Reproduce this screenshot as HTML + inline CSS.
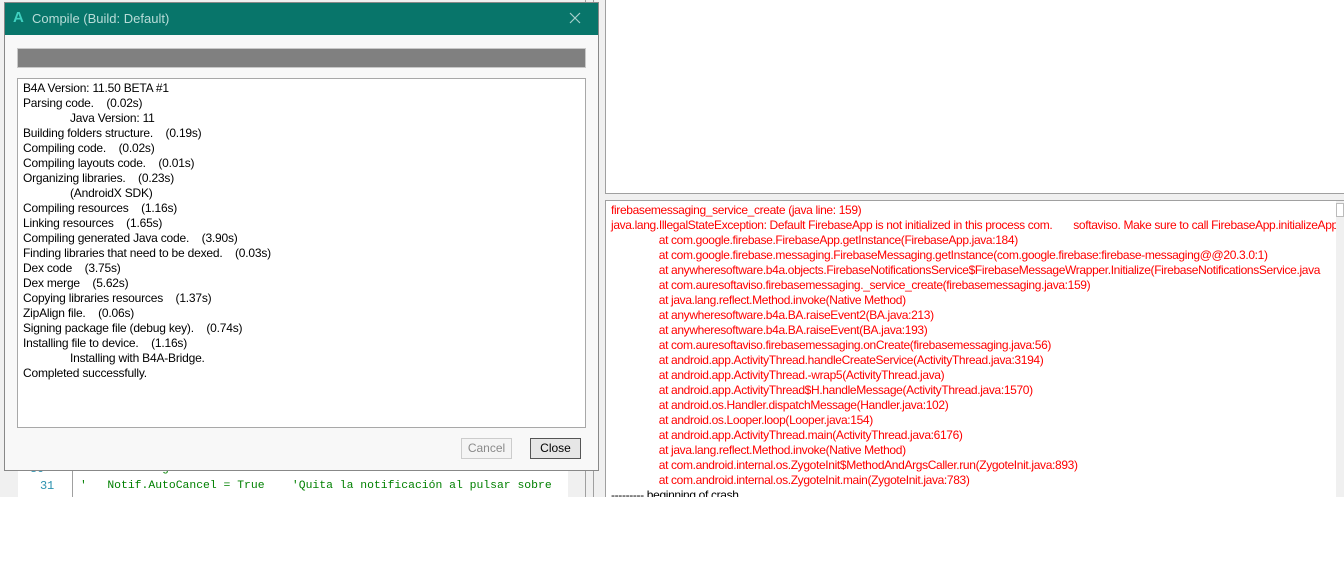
<!DOCTYPE html>
<html><head><meta charset="utf-8"><style>
*{margin:0;padding:0;box-sizing:border-box}
body{width:1344px;height:586px;background:#fff;position:relative;overflow:hidden;font-family:"Liberation Sans",sans-serif;font-size:12px}
.abs{position:absolute}
.t{position:absolute;white-space:pre;line-height:15px;letter-spacing:-0.2px}
</style></head><body>
<div class="abs" style="left:0;top:0;width:605px;height:497px;background:#f0f0f0"></div>
<div class="abs" style="left:18px;top:455px;width:550px;height:42px;background:#fff"></div>
<div class="abs" style="left:72px;top:455px;width:1px;height:42px;background:#a0a0a0"></div>
<div class="t" style="left:30px;top:462px;font-family:'Liberation Mono',monospace;color:#2b91af;font-size:12px">30</div>
<div class="t" style="left:40px;top:479px;font-family:'Liberation Mono',monospace;color:#2b91af;font-size:12px">31</div>
<div class="abs" style="left:73px;top:455px;width:495px;height:42px;overflow:hidden">
<div class="t" style="left:7px;top:7px;font-family:'Liberation Mono',monospace;color:#008000;font-size:11.4px;letter-spacing:0">'   Notif.Light = True           'Se encenderá la luz de notificación</div>
<div class="t" style="left:7px;top:24px;font-family:'Liberation Mono',monospace;color:#008000;font-size:11.4px;letter-spacing:0">'   Notif.AutoCancel = True    'Quita la notificación al pulsar sobre</div>
</div>
<div class="abs" style="left:585px;top:0;width:1px;height:497px;background:#a0a0a0"></div>
<div class="abs" style="left:593px;top:0;width:1px;height:497px;background:#a0a0a0"></div>
<div class="abs" style="left:605px;top:0;width:739px;height:194px;background:#fff;border-left:1px solid #a0a0a0;border-bottom:1px solid #a0a0a0"></div>
<div class="abs" style="left:605px;top:194px;width:739px;height:6px;background:#f0f0f0"></div>
<div class="abs" style="left:605px;top:200px;width:739px;height:297px;background:#fff;border-left:1px solid #a0a0a0;border-top:1px solid #a0a0a0;overflow:hidden">
<div class="t" style="left:5px;top:2px;color:#ff0000;letter-spacing:-0.35px">firebasemessaging_service_create (java line: 159)
java.lang.IllegalStateException: Default FirebaseApp is not initialized in this process com.       softaviso. Make sure to call FirebaseApp.initializeApp
                at com.google.firebase.FirebaseApp.getInstance(FirebaseApp.java:184)
                at com.google.firebase.messaging.FirebaseMessaging.getInstance(com.google.firebase:firebase-messaging@@20.3.0:1)
                at anywheresoftware.b4a.objects.FirebaseNotificationsService$FirebaseMessageWrapper.Initialize(FirebaseNotificationsService.java
                at com.auresoftaviso.firebasemessaging._service_create(firebasemessaging.java:159)
                at java.lang.reflect.Method.invoke(Native Method)
                at anywheresoftware.b4a.BA.raiseEvent2(BA.java:213)
                at anywheresoftware.b4a.BA.raiseEvent(BA.java:193)
                at com.auresoftaviso.firebasemessaging.onCreate(firebasemessaging.java:56)
                at android.app.ActivityThread.handleCreateService(ActivityThread.java:3194)
                at android.app.ActivityThread.-wrap5(ActivityThread.java)
                at android.app.ActivityThread$H.handleMessage(ActivityThread.java:1570)
                at android.os.Handler.dispatchMessage(Handler.java:102)
                at android.os.Looper.loop(Looper.java:154)
                at android.app.ActivityThread.main(ActivityThread.java:6176)
                at java.lang.reflect.Method.invoke(Native Method)
                at com.android.internal.os.ZygoteInit$MethodAndArgsCaller.run(ZygoteInit.java:893)
                at com.android.internal.os.ZygoteInit.main(ZygoteInit.java:783)<span style="color:#000">
--------- beginning of crash</span></div>
<div class="abs" style="right:0;top:0;width:8px;height:297px;background:#f0f0f0"></div>
<div class="abs" style="right:0;top:2px;width:8px;height:14px;border:1px solid #bbb;background:#fff"></div>
</div>
<div class="abs" style="left:4px;top:2px;width:595px;height:469px;background:#f8f8f8;border:1px solid #888">
<div class="abs" style="left:0;top:0;width:593px;height:32px;background:#08756a"></div>
<div class="abs" style="left:8px;top:6px;color:#3fd0c0;font-weight:bold;font-size:15px">A</div>
<div class="abs" style="left:27px;top:8px;color:#b8dcd8;font-size:13px">Compile (Build: Default)</div>
<svg class="abs" style="left:564px;top:9px" width="12" height="12"><path d="M1 1L11 11M11 1L1 11" stroke="#a8d0cc" stroke-width="1.2"/></svg>
<div class="abs" style="left:12px;top:45px;width:569px;height:20px;background:#808080;border:1px solid #c8c8c8"></div>
<div class="abs" style="left:12px;top:75px;width:569px;height:350px;background:#fff;border:1px solid #a8a8a8"></div>
<div class="t" style="left:18px;top:78px;color:#000">B4A Version: 11.50 BETA #1
Parsing code.    (0.02s)
               Java Version: 11
Building folders structure.    (0.19s)
Compiling code.    (0.02s)
Compiling layouts code.    (0.01s)
Organizing libraries.    (0.23s)
               (AndroidX SDK)
Compiling resources    (1.16s)
Linking resources    (1.65s)
Compiling generated Java code.    (3.90s)
Finding libraries that need to be dexed.    (0.03s)
Dex code    (3.75s)
Dex merge    (5.62s)
Copying libraries resources    (1.37s)
ZipAlign file.    (0.06s)
Signing package file (debug key).    (0.74s)
Installing file to device.    (1.16s)
               Installing with B4A-Bridge.
Completed successfully.</div>
<div class="abs" style="left:456px;top:435px;width:51px;height:21px;border:1px solid #ccc;background:#f4f4f4;color:#8a8a8a;text-align:center;line-height:19px">Cancel</div>
<div class="abs" style="left:525px;top:435px;width:51px;height:21px;border:1px solid #555;background:#e6e6e6;color:#000;text-align:center;line-height:19px">Close</div>
</div>
</body></html>
